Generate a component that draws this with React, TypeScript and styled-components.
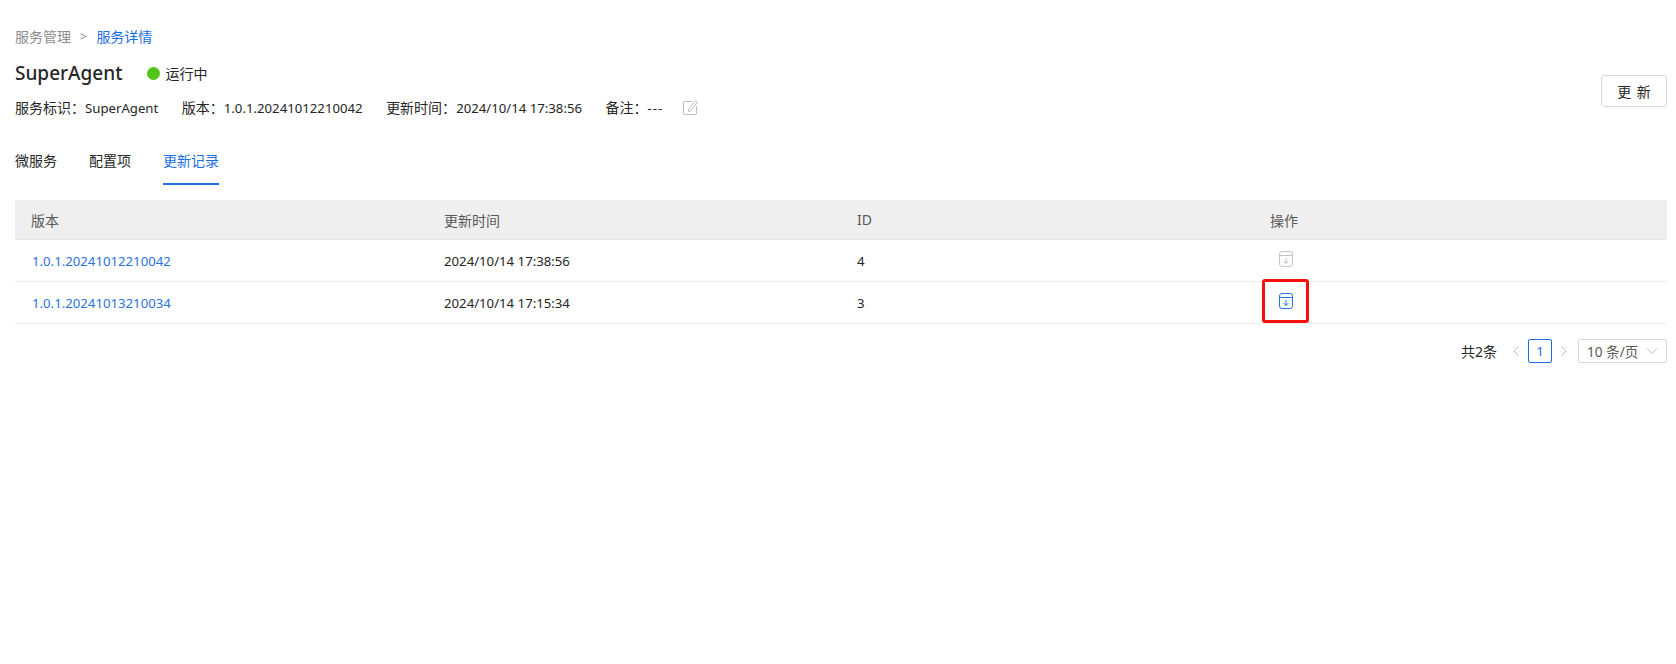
import React from 'react';
import styled, { createGlobalStyle } from 'styled-components';

const GlobalStyle = createGlobalStyle`
  html, body {
    margin: 0;
    padding: 0;
    background: #fff;
  }
  body {
    font-family: "Noto Sans", "Noto Sans CJK SC", sans-serif;
    font-size: 14px;
    color: #262626;
  }
`;

const Page = styled.div`
  box-sizing: border-box;
  width: 1676px;
  height: 664px;
  padding: 27px 9px 0 15px;
`;

const Breadcrumb = styled.div`
  display: flex;
  align-items: center;
  height: 20px;
  line-height: 20px;
  font-size: 14px;
`;

const CrumbLink = styled.span<{ $current?: boolean }>`
  color: ${({ $current }) => ($current ? '#1a6fe0' : '#8c8c8c')};
`;

const CrumbSeparator = styled.span`
  margin: 0 9.5px 0 9px;
  color: #8c8c8c;
  font-size: 12px;
`;

const Header = styled.div`
  display: flex;
  justify-content: space-between;
  align-items: center;
  margin-top: 11px;
`;

const TitleRow = styled.div`
  display: flex;
  align-items: center;
  height: 30px;
`;

const Title = styled.h1`
  margin: 0;
  font-size: 19px;
  font-weight: 500;
  color: #262626;
`;

const Status = styled.span`
  display: flex;
  align-items: center;
  margin-left: 25px;
  font-size: 14px;
`;

const StatusDot = styled.i`
  display: block;
  width: 13px;
  height: 13px;
  margin-right: 5px;
  border-radius: 50%;
  background: #52c41a;
`;

const MetaRow = styled.div`
  display: flex;
  align-items: center;
  margin-top: 7px;
  height: 24px;
  font-size: 13.2px;
`;

const MetaItem = styled.span`
  margin-right: 23.5px;
  white-space: nowrap;
`;

const Label = styled.span`
  font-size: 14px;
`;

const Dashes = styled.span`
  letter-spacing: 1px;
`;

const EditIcon = styled.svg`
  width: 17px;
  height: 17px;
  margin-left: -5px;
  color: #bdbdbd;
`;

const UpdateButton = styled.button`
  box-sizing: border-box;
  width: 66px;
  height: 32px;
  margin-top: 4px;
  padding: 0;
  border: 1px solid #d9d9d9;
  border-radius: 3px;
  background: #fff;
  color: #262626;
  font: inherit;
  font-size: 14px;
  word-spacing: 2px;
`;

const Tabs = styled.div`
  display: flex;
  gap: 32px;
  margin-top: 23px;
`;

const Tab = styled.div<{ $active?: boolean }>`
  box-sizing: border-box;
  height: 43px;
  padding-top: 9px;
  line-height: 20px;
  font-size: 14px;
  color: ${({ $active }) => ($active ? '#1a6fe0' : '#262626')};
  border-bottom: 2px solid ${({ $active }) => ($active ? '#1a6fe0' : 'transparent')};
`;

const Table = styled.div`
  margin-top: 15px;
`;

const HeadRow = styled.div`
  display: grid;
  grid-template-columns: repeat(4, 1fr);
  align-items: center;
  height: 40px;
  background: #efefef;
  border-bottom: 1px solid #e4e4e4;
  box-sizing: border-box;
  color: #595959;
`;

const Row = styled.div`
  display: grid;
  grid-template-columns: repeat(4, 1fr);
  align-items: center;
  box-sizing: border-box;
  height: 42px;
  border-bottom: 1px solid #eeeeee;
  font-size: 13.2px;
`;

const Cell = styled.div`
  padding-left: 16px;
`;

const VersionLink = styled.a`
  margin-left: 1px;
  color: #2a74de;
`;

const ActionIcon = styled.svg<{ $disabled?: boolean }>`
  display: block;
  width: 14px;
  height: 16px;
  color: ${({ $disabled }) => ($disabled ? '#c4c4c4' : '#2a74de')};
`;

const ActionWrap = styled.span<{ $on?: boolean }>`
  position: relative;
  display: inline-block;
  margin: 0 0 3px 9px;
  vertical-align: middle;
  &::after {
    content: '';
    display: ${({ $on }) => ($on ? 'block' : 'none')};
    position: absolute;
    left: -17px;
    top: -14.5px;
    width: 47px;
    height: 44px;
    box-sizing: border-box;
    border: 3px solid #f5120c;
    border-radius: 3px;
  }
`;

const Pagination = styled.div`
  display: flex;
  justify-content: flex-end;
  align-items: center;
  height: 24px;
  margin-top: 15px;
  font-size: 13.2px;
`;

const Total = styled.span`
  margin-right: 15px;
  font-size: 14px;
`;

const PageArrow = styled.svg`
  width: 8px;
  height: 10px;
  color: #bfbfbf;
`;

const PageNumber = styled.span`
  box-sizing: border-box;
  width: 24px;
  height: 24px;
  margin: 0 8px;
  line-height: 22px;
  text-align: center;
  border: 1px solid #1a6fe0;
  border-radius: 2px;
  color: #1a6fe0;
`;

const PageSize = styled.div`
  display: flex;
  justify-content: space-between;
  align-items: center;
  box-sizing: border-box;
  width: 89px;
  height: 24px;
  margin-left: 10px;
  padding: 0 8px;
  border: 1px solid #d9d9d9;
  border-radius: 2px;
  font-size: 13.6px;
  color: #595959;
`;

const Chevron = styled.svg`
  width: 12px;
  height: 12px;
  color: #bfbfbf;
`;

const ArchiveIcon = ({ disabled }: { disabled?: boolean }) => (
  <ActionIcon $disabled={disabled} viewBox="0 0 14 16" fill="none" stroke="currentColor" strokeWidth="1">
    <rect x="0.5" y="0.5" width="13" height="15" rx="2.5" />
    <path d="M.5 4.500h13" />
    <path d="M7 7v5.500M4.500 10 7 12.500 9.500 10" />
  </ActionIcon>
);

const records = [
  { version: '1.0.1.20241012210042', time: '2024/10/14 17:38:56', id: '4', disabled: true },
  { version: '1.0.1.20241013210034', time: '2024/10/14 17:15:34', id: '3', disabled: false },
];

export default function App() {
  return (
    <Page>
      <GlobalStyle />
      <Breadcrumb>
        <CrumbLink>服务管理</CrumbLink>
        <CrumbSeparator>&gt;</CrumbSeparator>
        <CrumbLink $current>服务详情</CrumbLink>
      </Breadcrumb>
      <Header>
        <div>
          <TitleRow>
            <Title>SuperAgent</Title>
            <Status>
              <StatusDot />
              运行中
            </Status>
          </TitleRow>
          <MetaRow>
            <MetaItem>
              <Label>服务标识：</Label>SuperAgent
            </MetaItem>
            <MetaItem>
              <Label>版本：</Label>1.0.1.20241012210042
            </MetaItem>
            <MetaItem>
              <Label>更新时间：</Label>2024/10/14 17:38:56
            </MetaItem>
            <MetaItem>
              <Label>备注：</Label>
              <Dashes>---</Dashes>
            </MetaItem>
            <EditIcon viewBox="0 0 17 17" fill="none" stroke="currentColor" strokeWidth="1">
              <path d="M10 2.500H2.500a1 1 0 0 0-1 1v11a1 1 0 0 0 1 1h11a1 1 0 0 0 1-1V7" />
              <path d="M6.500 10.500 13.500 1.500l2 1.500-7 9-2.200.8z" />
            </EditIcon>
          </MetaRow>
        </div>
        <UpdateButton>更 新</UpdateButton>
      </Header>
      <Tabs>
        <Tab>微服务</Tab>
        <Tab>配置项</Tab>
        <Tab $active>更新记录</Tab>
      </Tabs>
      <Table>
        <HeadRow>
          <Cell>版本</Cell>
          <Cell>更新时间</Cell>
          <Cell>ID</Cell>
          <Cell>操作</Cell>
        </HeadRow>
        {records.map((r) => (
          <Row key={r.id}>
            <Cell>
              <VersionLink>{r.version}</VersionLink>
            </Cell>
            <Cell>{r.time}</Cell>
            <Cell>{r.id}</Cell>
            <Cell>
              <ActionWrap $on={!r.disabled}>
                <ArchiveIcon disabled={r.disabled} />
              </ActionWrap>
            </Cell>
          </Row>
        ))}
      </Table>
      <Pagination>
        <Total>共2条</Total>
        <PageArrow viewBox="0 0 8 10" fill="none" stroke="currentColor">
          <path d="M6.500.5 2 5l4.500 4.500" />
        </PageArrow>
        <PageNumber>1</PageNumber>
        <PageArrow viewBox="0 0 8 10" fill="none" stroke="currentColor">
          <path d="M1.500.5 6 5 1.500 9.500" />
        </PageArrow>
        <PageSize>
          10 条/页
          <Chevron viewBox="0 0 12 12" fill="none" stroke="currentColor">
            <path d="m1 3.500 5 5 5-5" />
          </Chevron>
        </PageSize>
      </Pagination>
    </Page>
  );
}
